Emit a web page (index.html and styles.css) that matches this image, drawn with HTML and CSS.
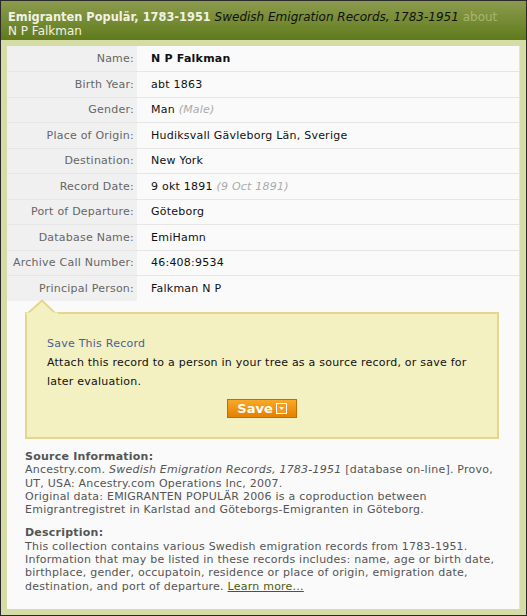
FILE: index.html
```html
<!DOCTYPE html>
<html>
<head>
<meta charset="utf-8">
<link rel="stylesheet" href="styles.css">
</head>
<body>
<div class="frame">
  <div class="header">
    <div class="h-line"><span class="h-title">Emigranten Populär, 1783-1951</span> <span class="h-sub">Swedish Emigration Records, 1783-1951</span> <span class="h-about">about</span></div>
    <div class="h-line">N P Falkman</div>
  </div>
  <div class="band">
    <div class="panel">
      <table class="rec">
        <tr><th>Name:</th><td><b>N P Falkman</b></td></tr>
        <tr><th>Birth Year:</th><td>abt 1863</td></tr>
        <tr><th>Gender:</th><td>Man <i class="alt">(Male)</i></td></tr>
        <tr><th>Place of Origin:</th><td>Hudiksvall Gävleborg Län, Sverige</td></tr>
        <tr><th>Destination:</th><td>New York</td></tr>
        <tr><th>Record Date:</th><td>9 okt 1891 <i class="alt">(9 Oct 1891)</i></td></tr>
        <tr><th>Port of Departure:</th><td>Göteborg</td></tr>
        <tr><th>Database Name:</th><td>EmiHamn</td></tr>
        <tr><th>Archive Call Number:</th><td>46:408:9534</td></tr>
        <tr><th>Principal Person:</th><td>Falkman N P</td></tr>
      </table>
      <div class="lower">
        <div class="savebox">
          <svg class="pointer" width="32" height="15" viewBox="0 0 32 15"><polygon points="1,15 16,1.5 30,15" fill="#f3f0c2" stroke="#e6d68c" stroke-width="2"/><rect x="0" y="13.5" width="32" height="2" fill="#f3f0c2"/></svg>
          <div class="save-title">Save This Record</div>
          <div class="save-text">Attach this record to a person in your tree as a source record, or save for later evaluation.</div>
          <div class="btn-row"><span class="btn">Save <span class="arrow"><svg width="11" height="11" viewBox="0 0 11 11"><rect x="0.5" y="0.5" width="10" height="10" fill="#f39a20" stroke="#fff"/><polygon points="3,4 8,4 5.5,7" fill="#fff"/></svg></span></span></div>
        </div>
        <div class="info">
          <div class="info-h">Source Information:</div>
          <div>Ancestry.com. <i>Swedish Emigration Records, 1783-1951</i> [database on-line]. Provo, UT, USA: Ancestry.com Operations Inc, 2007.</div>
          <div>Original data: EMIGRANTEN POPULÄR 2006 is a coproduction between Emigrantregistret in Karlstad and Göteborgs-Emigranten in Göteborg.</div>
        </div>
        <div class="info desc">
          <div class="info-h">Description:</div>
          <div>This collection contains various Swedish emigration records from 1783-1951. Information that may be listed in these records includes: name, age or birth date, birthplace, gender, occupatoin, residence or place of origin, emigration date, destination, and port of departure. <a class="more" href="#">Learn more...</a></div>
        </div>
      </div>
    </div>
  </div>
</div>
</body>
</html>
```

FILE: styles.css
```css
* { box-sizing: border-box; }
html, body { margin: 0; padding: 0; background: #fff; }
body { font-family: "DejaVu Sans", Verdana, sans-serif; font-size: 11px; letter-spacing: 0.23px; }
.frame {
  width: 527px;
  height: 616px;
  border: 1px solid #2a2a2a;
  display: flex;
  flex-direction: column;
  background: #d5dca5;
}
.header {
  background: linear-gradient(#8c9c4e, #5f7a1c);
  padding: 9px 7px 0;
  height: 39px;
  color: #f2f2e4;
  font-size: 12px;
  line-height: 14px;
  letter-spacing: 0;
}
.h-line { white-space: nowrap; }
.h-title { font-weight: bold; font-size: 11.4px; }
.h-sub { font-style: italic; color: #111; }
.h-about { color: #a9b56f; }
.band {
  flex: 1;
  padding: 6px 6px 6px 6px;
}
.panel {
  background: #fafafa;
  height: 100%;
  border-right: 1px solid #e4e4d8;
}
.rec { width: 100%; border-collapse: collapse; }
.rec th, .rec td {
  height: 25.5px;
  padding: 0;
  border-bottom: 1px solid #e6e6e6;
  vertical-align: middle;
  white-space: nowrap;
}
.rec th {
  width: 130px;
  background: #f0f0f0;
  text-align: right;
  font-weight: normal;
  color: #666;
  padding-right: 3px;
}
.rec td { color: #111; padding-left: 14px; }
.rec tr:last-child th, .rec tr:last-child td { border-bottom: none; }
.alt { color: #aaa; }
.lower { padding: 11px 20px 0 18px; }
.savebox {
  position: relative;
  background: #f3f0c2;
  border: 2px solid #e6d68c;
  padding: 20px 20px 18px 20px;
  line-height: 19px;
  color: #111;
}
.pointer { position: absolute; left: -1px; top: -15px; }
.save-title { color: #4b5f98; }
.btn-row { text-align: center; margin-top: 8px; line-height: 19px; }
.btn {
  display: inline-flex;
  align-items: center;
  gap: 3px;
  height: 19px;
  width: 70px;
  justify-content: center;
  background: linear-gradient(#f8a928, #e57f00);
  border: 1px solid #c76b00;
  color: #fff;
  font-weight: bold;
  font-size: 13px;
  letter-spacing: 0;
  font-family: "DejaVu Sans", Verdana, sans-serif;
}
.arrow { display: inline-flex; }
.info { color: #555; line-height: 13.3px; margin-top: 11px; }
.info i, .info a { display: inline-block; line-height: 13px; }
.info-h { font-weight: bold; }
.desc { margin-top: 10px; }
.more { color: #4d5c10; text-decoration: underline; }
```
